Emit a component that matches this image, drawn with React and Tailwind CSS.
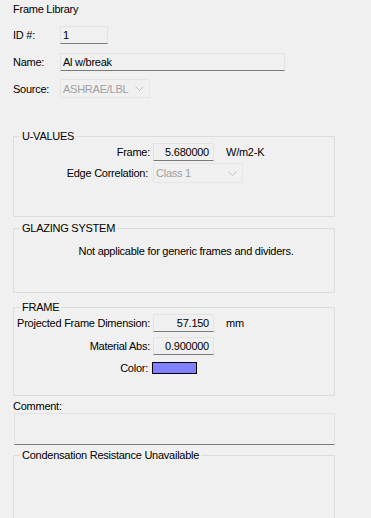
import React from "react";

function Chevron() {
  return (
    <svg width="9" height="5" viewBox="0 0 9 5" className="shrink-0">
      <path d="M0.5 0.5 L4.5 4.5 L8.5 0.5" fill="none" stroke="#c2c2c2" strokeWidth="1" />
    </svg>
  );
}

function TextBox({ className = "", children }) {
  return (
    <div
      className={
        "flex items-center h-[18px] bg-[#f0f0f0] border border-[#e3e3e3] border-b-[#7a7a7a] " +
        className
      }
    >
      {children}
    </div>
  );
}

function Combo({ className = "", text }) {
  return (
    <div
      className={
        "flex items-center justify-between border border-[#e5e5e5] bg-[#f0f0f0] pl-[2px] pr-[5px] text-[#a0a0a0] " +
        className
      }
    >
      <span>{text}</span>
      <Chevron />
    </div>
  );
}

function Group({ title, className = "", children }) {
  return (
    <fieldset className={"w-[322px] border border-[#dcdcdc] overflow-hidden " + className}>
      <legend className="ml-[6px] px-[2px] leading-[14px]">{title}</legend>
      {children}
    </fieldset>
  );
}

export default function App() {
  return (
    <div className="w-[371px] h-[518px] overflow-hidden whitespace-nowrap bg-[#f0f0f0] pl-[13px] text-[11px] tracking-[-0.25px] leading-[14px] text-black font-['Liberation_Sans',Arial,sans-serif]">
      <div className="pt-[2px]">Frame Library</div>

      {/* ID / Name / Source */}
      <div className="flex items-center mt-[10px]">
        <span className="w-[47px]">ID #:</span>
        <TextBox className="w-[48px] pl-[2px]">1</TextBox>
      </div>
      <div className="flex items-center mt-[9px]">
        <span className="w-[47px]">Name:</span>
        <TextBox className="w-[225px] pl-[2px]">Al w/break</TextBox>
      </div>
      <div className="flex items-center mt-[8px]">
        <span className="w-[47px]">Source:</span>
        <Combo className="w-[90px] h-[19px]" text="ASHRAE/LBL" />
      </div>

      {/* U-VALUES */}
      <Group title="U-VALUES" className="mt-[31px] h-[88px]">
        <div className="flex items-center">
          <span className="w-[136px] text-right">Frame:</span>
          <TextBox className="ml-[3px] w-[61px] justify-end pr-[4px]">5.680000</TextBox>
          <span className="ml-[12px]">W/m2-K</span>
        </div>
        <div className="flex items-center mt-[2px]">
          <span className="w-[136px] text-right pr-[2px]">Edge Correlation:</span>
          <Combo className="ml-[3px] w-[90px] h-[20px]" text="Class 1" />
        </div>
      </Group>

      {/* GLAZING SYSTEM */}
      <Group title="GLAZING SYSTEM" className="mt-[4px] h-[72px]">
        <div className="mt-[9px] pl-[24px] text-center">
          Not applicable for generic frames and dividers.
        </div>
      </Group>

      {/* FRAME */}
      <Group title="FRAME" className="mt-[7px] h-[96px]">
        <div className="flex items-center">
          <span className="w-[136px] text-right">Projected Frame Dimension:</span>
          <TextBox className="ml-[3px] w-[61px] justify-end pr-[4px]">57.150</TextBox>
          <span className="ml-[12px]">mm</span>
        </div>
        <div className="flex items-center mt-[5px]">
          <span className="w-[136px] text-right">Material Abs:</span>
          <TextBox className="ml-[3px] w-[61px] justify-end pr-[4px]">0.900000</TextBox>
        </div>
        <div className="flex items-center mt-[6px]">
          <span className="w-[136px] text-right pr-[2px]">Color:</span>
          <div className="ml-[2px] w-[45px] h-[12px] border border-black bg-[#8080ff]" />
        </div>
      </Group>

      {/* Comment */}
      <div className="mt-[4px] leading-[13px]">Comment:</div>
      <div className="ml-[1px] w-[321px] h-[32px] border border-[#e3e3e3] border-b-[#7a7a7a] bg-[#f0f0f0]" />

      {/* Condensation */}
      <Group title="Condensation Resistance Unavailable" className="mt-[3px] h-[90px]" />
    </div>
  );
}
